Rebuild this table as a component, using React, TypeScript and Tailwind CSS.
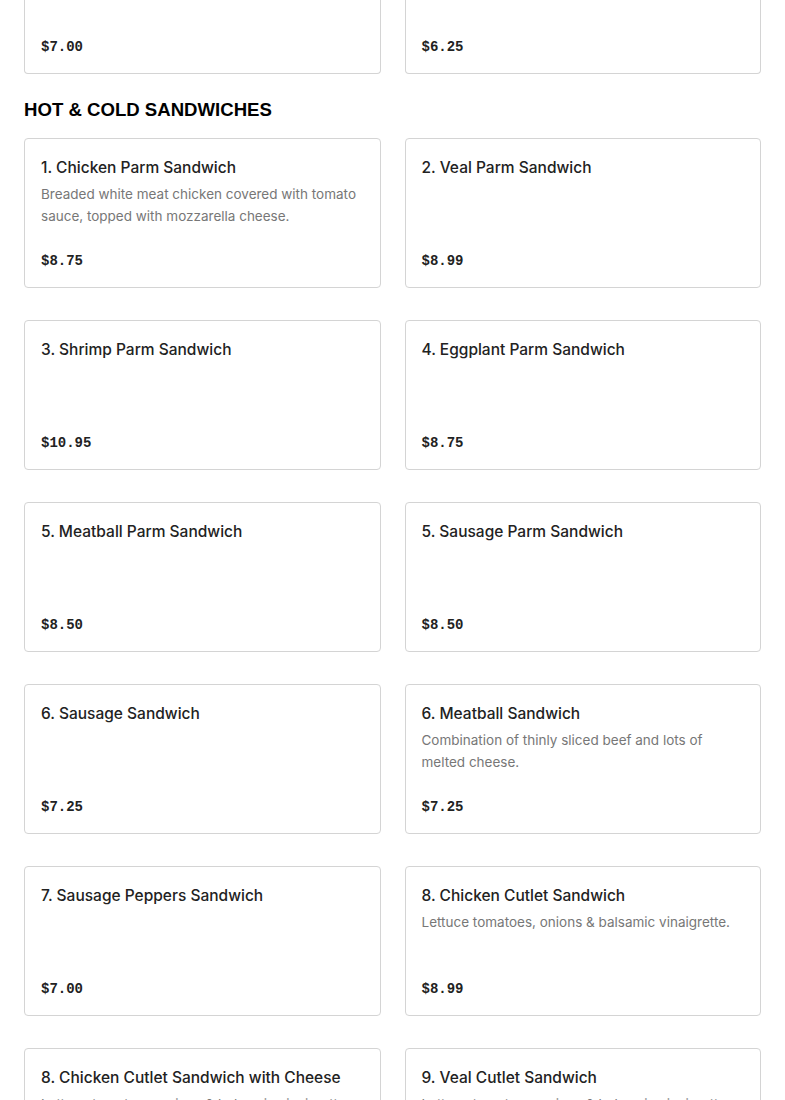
import React from "react";

type Item = { name: string; desc?: string; price: string };

const ITEMS: Item[] = [
  {
    name: "1. Chicken Parm Sandwich",
    desc: "Breaded white meat chicken covered with tomato sauce, topped with mozzarella cheese.",
    price: "$8.75",
  },
  { name: "2. Veal Parm Sandwich", price: "$8.99" },
  { name: "3. Shrimp Parm Sandwich", price: "$10.95" },
  { name: "4. Eggplant Parm Sandwich", price: "$8.75" },
  { name: "5. Meatball Parm Sandwich", price: "$8.50" },
  { name: "5. Sausage Parm Sandwich", price: "$8.50" },
  { name: "6. Sausage Sandwich", price: "$7.25" },
  {
    name: "6. Meatball Sandwich",
    desc: "Combination of thinly sliced beef and lots of melted cheese.",
    price: "$7.25",
  },
  { name: "7. Sausage Peppers Sandwich", price: "$7.00" },
  {
    name: "8. Chicken Cutlet Sandwich",
    desc: "Lettuce tomatoes, onions & balsamic vinaigrette.",
    price: "$8.99",
  },
  {
    name: "8. Chicken Cutlet Sandwich with Cheese",
    desc: "Lettuce tomatoes, onions & balsamic vinaigrette.",
    price: "$9.50",
  },
  {
    name: "9. Veal Cutlet Sandwich",
    desc: "Lettuce tomatoes, onions & balsamic vinaigrette.",
    price: "$9.99",
  },
];

const sans = "font-['Inter','Liberation_Sans',sans-serif]";
const mono = "font-['Liberation_Mono','Courier_New',monospace]";

const Price = ({ children }: { children: React.ReactNode }) => (
  <div className={`${mono} text-[14px] leading-5 font-bold text-[#222]`}>{children}</div>
);

const Card = ({ item }: { item: Item }) => (
  <div className="flex h-[150px] flex-col justify-between rounded-[4px] border border-[#d4d4d4] bg-white px-4 pt-[17px] pb-4">
    <div>
      <div className={`${sans} text-[15.5px] leading-6 font-medium text-[#222]`}>{item.name}</div>
      {item.desc && (
        <p className={`${sans} mt-[3px] text-[13.5px] leading-[22px] text-[#777]`}>{item.desc}</p>
      )}
    </div>
    <Price>{item.price}</Price>
  </div>
);

export default function App() {
  return (
    <div className="bg-white px-6">
      <div className="grid grid-cols-2 gap-6">
        <div className="flex h-[74px] flex-col justify-end rounded-b-[4px] border-x border-b border-[#d4d4d4] px-4 pb-4">
          <Price>$7.00</Price>
        </div>
        <div className="flex h-[74px] flex-col justify-end rounded-b-[4px] border-x border-b border-[#d4d4d4] px-4 pb-4">
          <Price>$6.25</Price>
        </div>
      </div>
      <h2 className="mt-6 mb-4 font-['Liberation_Sans',Arial,sans-serif] text-[18.6px] leading-6 font-black text-black">
        HOT &amp; COLD SANDWICHES
      </h2>
      <div className="grid grid-cols-2 gap-x-6 gap-y-8">
        {ITEMS.map((it) => (
          <Card key={it.name} item={it} />
        ))}
      </div>
    </div>
  );
}
